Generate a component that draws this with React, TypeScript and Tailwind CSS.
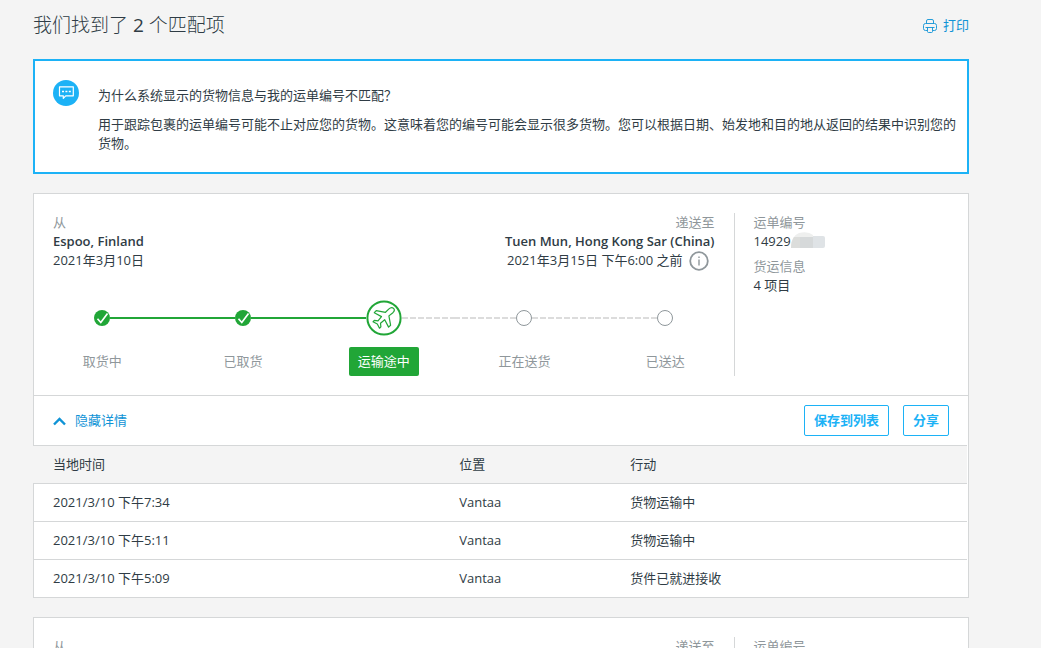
import { useState } from 'react'

type StepState = 'done' | 'current' | 'todo'

const STEPS: { label: string; state: StepState }[] = [
  { label: '取货中', state: 'done' },
  { label: '已取货', state: 'done' },
  { label: '运输途中', state: 'current' },
  { label: '正在送货', state: 'todo' },
  { label: '已送达', state: 'todo' },
]

const EVENTS = [
  { time: '2021/3/10 下午7:34', place: 'Vantaa', action: '货物运输中' },
  { time: '2021/3/10 下午5:11', place: 'Vantaa', action: '货物运输中' },
  { time: '2021/3/10 下午5:09', place: 'Vantaa', action: '货件已就进接收' },
]

function PrinterIcon() {
  return (
    <svg className="h-[14px] w-[14px]" viewBox="0 0 14 14" fill="none" stroke="currentColor" strokeWidth="0.9">
      <path d="M3.5 4.5v-2.500q0-1.500 1.500-1.500h4q1.500 0 1.500 1.500v2.500" />
      <path d="M4 11.500h-1.500q-2 0-2-2v-3q0-2 2-2h9q2 0 2 2v3q0 2-2 2h-1.500" />
      <path d="M2.500 8.500h9M4.500 8.500v4q0 1 1 1h3q1 0 1-1v-4" />
    </svg>
  )
}

function ChatIcon() {
  return (
    <svg className="h-[26px] w-[26px] shrink-0" viewBox="0 0 26 26" fill="none">
      <circle cx="13" cy="13" r="13" fill="#1cb2f6" />
      <path d="M6.500 6.800h13.800v9h-7.600l-2.400 2.600v-2.600H6.500z" stroke="#fff" strokeWidth="1.200" strokeLinejoin="round" />
      <path d="M9 11.500h2M12.400 11.500h2M15.800 11.500h2" stroke="#fff" strokeWidth="1.400" />
    </svg>
  )
}

function CheckIcon() {
  return (
    <svg className="h-4 w-4 shrink-0" viewBox="0 0 16 16" fill="none">
      <circle cx="8" cy="8" r="8" fill="#21a637" />
      <path d="M3.500 8.800l3.300 3.700L13.500 3.500" stroke="#fff" strokeWidth="1.700" />
    </svg>
  )
}

function PlaneIcon() {
  return (
    <svg className="h-9 w-9 shrink-0" viewBox="0 0 36 36" fill="none" stroke="#21a637">
      <circle cx="18" cy="18" r="16.600" strokeWidth="2" />
      <path
        d="M27.600 8.400c-1.300-1.200-3.500-.6-4.900.8L19.500 12.300l-9.300-1.600-1.900 2 7.200 3.900-3.500 4.200-3.700-.5-1.300 1.500 4.300 2.200 2.200 4.200 1.400-1.300-.4-3.700 4.200-3.500 3.900 7.400 2-1.900-1.700-9.300 4-3.200c1.400-1.400 2-3 .7-4.300z"
        strokeWidth="1.200"
        strokeLinejoin="round"
      />
    </svg>
  )
}

function InfoIcon() {
  return (
    <svg className="h-5 w-5" viewBox="0 0 20 20" fill="none" stroke="#8f979b">
      <circle cx="10" cy="10" r="8.800" strokeWidth="1.800" />
      <path d="M10 8.500v6M10 5.500v1.500" strokeWidth="1.400" />
    </svg>
  )
}

// covers the rest of the waybill number
function NumberMask() {
  return (
    <svg className="h-[17px] w-[34px]" viewBox="0 0 34 17">
      <path d="M0 16q0-12 8-15q9-2 14 2v13z" fill="#eeefee" />
      <path d="M0 16q0-7 3-11h7v11z" fill="#dcdddb" />
      <path d="M9 5h13v11H9z" fill="#d6d9da" />
      <path d="M22 4h10q2 0 2 2v8q0 2-2 2H22z" fill="#dfe3e6" />
    </svg>
  )
}

function Connector({ kind }: { kind: 'none' | 'solid' | 'dashed' }) {
  if (kind === 'solid') return <span className="h-[2px] flex-1 bg-[#21a637]" />
  if (kind === 'dashed')
    return <span className="h-[2px] flex-1 bg-[repeating-linear-gradient(90deg,#dcdcdc_0_6px,transparent_6px_8px)]" />
  return <span className="flex-1" />
}

function Progress() {
  return (
    <ol className="-mx-[21px] mt-[30px] grid grid-cols-5">
      {STEPS.map((step, i) => (
        <li key={step.label} className="flex flex-col items-center gap-[11px]">
          <div className="flex h-9 w-full items-center">
            <Connector kind={i === 0 ? 'none' : step.state === 'todo' ? 'dashed' : 'solid'} />
            {step.state === 'done' && <CheckIcon />}
            {step.state === 'current' && <PlaneIcon />}
            {step.state === 'todo' && <span className="h-4 w-4 shrink-0 rounded-full border border-[#8f979b]" />}
            <Connector kind={i === STEPS.length - 1 ? 'none' : step.state === 'done' ? 'solid' : 'dashed'} />
          </div>
          <span
            className={
              step.state === 'current'
                ? 'rounded-xs bg-[#21a637] px-[9px] py-[5px] text-white'
                : 'px-[9px] py-[5px] text-[#8f979b]'
            }
          >
            {step.label}
          </span>
        </li>
      ))}
    </ol>
  )
}

function ShipmentDetails() {
  const [open, setOpen] = useState(true)

  return (
    <>
      <div className="flex h-[50px] items-center justify-between border-t border-[#d5d7d8] px-[19px]">
        <button type="button" onClick={() => setOpen(!open)} className="flex items-center gap-[9px] text-[#0f93d6]">
          <svg
            className={open ? 'h-[13px] w-[13px]' : 'h-[13px] w-[13px] rotate-180'}
            viewBox="0 0 13 13"
            fill="none"
            stroke="currentColor"
            strokeWidth="2.400"
          >
            <path d="M1 10.500l5.500-5.500L12 10.500" />
          </svg>
          {open ? '隐藏详情' : '显示详情'}
        </button>
        <div className="flex gap-[14px] font-bold text-[#1cb2f6]">
          <button type="button" className="rounded-xs border border-[#1cb2f6] px-[9px] py-[5px]">
            保存到列表
          </button>
          <button type="button" className="rounded-xs border border-[#1cb2f6] px-[9px] py-[5px]">
            分享
          </button>
        </div>
      </div>

      {open && (
        <table className="-ml-px w-full table-fixed border-t border-[#d5d7d8] text-left">
          <thead className="bg-[#f4f4f4]">
            <tr className="h-[38px]">
              <th className="w-[43.5%] pl-5 font-normal">当地时间</th>
              <th className="w-[18.3%] pl-5 font-normal">位置</th>
              <th className="pl-5 font-normal">行动</th>
            </tr>
          </thead>
          <tbody>
            {EVENTS.map((event) => (
              <tr key={event.time} className="h-[38px] border-t border-[#d5d7d8] last:h-[37px]">
                <td className="pl-5">{event.time}</td>
                <td className="pl-5">{event.place}</td>
                <td className="pl-5">{event.action}</td>
              </tr>
            ))}
          </tbody>
        </table>
      )}
    </>
  )
}

function ShipmentCard({ full = false }: { full?: boolean }) {
  return (
    <section className="mt-[19px] border border-[#d5d7d8] bg-white">
      <div className="flex py-[19px]">
        <div className="w-3/4 border-r border-[#d5d7d8] px-[19px]">
          <div className="flex justify-between">
            <div>
              <p className="text-[#8f979b]">从</p>
              {full && (
                <>
                  <p className="font-semibold">Espoo, Finland</p>
                  <p>2021年3月10日</p>
                </>
              )}
            </div>
            <div className="text-right">
              <p className="text-[#8f979b]">递送至</p>
              {full && (
                <>
                  <p className="font-semibold">Tuen Mun, Hong Kong Sar (China)</p>
                  <div className="flex h-[19px] items-center justify-end gap-[6px] pr-[6px]">
                    <span>2021年3月15日 下午6:00 之前</span>
                    <button type="button" aria-label="更多信息">
                      <InfoIcon />
                    </button>
                  </div>
                </>
              )}
            </div>
          </div>
          {full && <Progress />}
        </div>
        <div className="flex-1 pl-[19px]">
          <p className="text-[#8f979b]">运单编号</p>
          {full && (
            <>
              <div className="flex">
                14929
                <NumberMask />
              </div>
              <p className="mt-[6px] text-[#8f979b]">货运信息</p>
              <p>4 项目</p>
            </>
          )}
        </div>
      </div>
      {full && <ShipmentDetails />}
    </section>
  )
}

export default function App() {
  return (
    <main className="min-h-screen bg-[#f4f4f4] pr-[72px] pl-[33px] font-['Open_Sans','Noto_Sans_CJK_SC',sans-serif] text-[13px] leading-[19px] text-[#2f3c45]">
      <header className="flex h-[59px] items-start justify-between pt-[11px]">
        <h1 className="text-[19px] leading-7 font-light">
          我们找到了 <span className="font-medium">2</span> 个匹配项
        </h1>
        <a href="#print" className="flex items-center gap-[6px] pt-[5px] text-[#0f93d6]">
          <PrinterIcon />
          打印
        </a>
      </header>

      <section className="flex gap-[19px] border-2 border-[#1cb2f6] bg-white py-[19px] pr-2 pl-[18px]">
        <ChatIcon />
        <div className="pt-[6px]">
          <p>为什么系统显示的货物信息与我的运单编号不匹配？</p>
          <p className="mt-[10px]">
            用于跟踪包裹的运单编号可能不止对应您的货物。这意味着您的编号可能会显示很多货物。您可以根据日期、始发地和目的地从返回的结果中识别您的货物。
          </p>
        </div>
      </section>

      <ShipmentCard full />
      <ShipmentCard />
    </main>
  )
}
